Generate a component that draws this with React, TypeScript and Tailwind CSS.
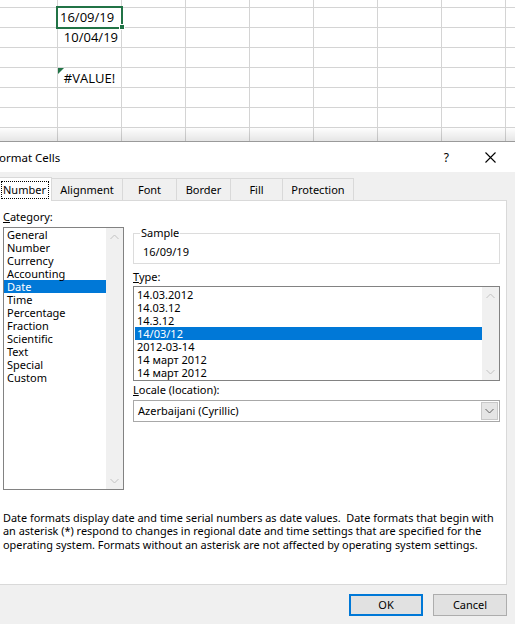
import React from "react";

function Chevron({ dir, color = "#c2c2c2" }: { dir: "up" | "down"; color?: string }) {
  return (
    <svg width="9" height="6" viewBox="0 0 9 6">
      <polyline
        points={dir === "up" ? "0.5,5 4.5,1 8.5,5" : "0.5,1 4.5,5 8.5,1"}
        fill="none"
        stroke={color}
        strokeWidth="1"
      />
    </svg>
  );
}

function Scrollbar() {
  return (
    <div className="w-[17px] shrink-0 bg-[#f0f0f0] flex flex-col justify-between">
      <div className="h-[17px] flex items-center justify-center">
        <Chevron dir="up" />
      </div>
      <div className="h-[17px] flex items-center justify-center">
        <Chevron dir="down" />
      </div>
    </div>
  );
}

function Sheet() {
  const cells: React.ReactNode[] = [];
  for (let r = 0; r < 8; r++) {
    for (let c = 0; c < 9; c++) {
      let content: React.ReactNode = null;
      if (r === 1 && c === 1)
        content = <div className="h-full flex items-center pl-[2px] pt-[1px]">16/09/19</div>;
      if (r === 2 && c === 1)
        content = <div className="h-full flex items-center justify-end pr-[3px] pt-[1px]">10/04/19</div>;
      if (r === 4 && c === 1)
        content = (
          <div className="h-full flex items-center justify-center pt-[2px]">
            <span>#VALUE!</span>
            <svg className="absolute left-0 top-0" width="6" height="6" viewBox="0 0 6 6">
              <polygon points="0,0 6,0 0,6" fill="#217346" />
            </svg>
          </div>
        );
      cells.push(
        <div key={`${r}-${c}`} className="relative border-r border-b border-[#d4d4d4]">
          {content}
        </div>
      );
    }
  }
  return (
    <div className="relative h-[141px] overflow-hidden font-['Open_Sans',sans-serif] text-[13px] text-black">
      <div className="grid grid-cols-[58px_repeat(8,64px)] grid-rows-[8px_repeat(7,20px)]">{cells}</div>
      <div className="absolute left-[56px] top-[6px] w-[67px] h-[23px] border-2 border-[#217346]" />
      <div className="absolute left-[119px] top-[24px] w-[6px] h-[6px] bg-[#217346] border border-white" />
      <div className="absolute left-0 right-0 bottom-0 h-[14px] bg-linear-to-b from-transparent to-black/10" />
    </div>
  );
}

const tabs = [
  { label: "Number", w: "w-[52px]", selected: true },
  { label: "Alignment", w: "w-[71px]" },
  { label: "Font", w: "w-[54px]" },
  { label: "Border", w: "w-[54px]" },
  { label: "Fill", w: "w-[52px]" },
  { label: "Protection", w: "w-[71px]" },
];

const categories = [
  "General",
  "Number",
  "Currency",
  "Accounting",
  "Date",
  "Time",
  "Percentage",
  "Fraction",
  "Scientific",
  "Text",
  "Special",
  "Custom",
];

const types = ["14.03.2012", "14.03.12", "14.3.12", "14/03/12", "2012-03-14", "14 март 2012", "14 март 2012"];

function Dialog() {
  return (
    <div className="h-[483px] border-t border-[#9a9a9a] bg-[#f0f0f0] font-['Noto_Sans',sans-serif] text-[11px] text-black">
      {/* title bar */}
      <div className="h-[30px] bg-white flex items-center pt-[1px]">
        <span className="ml-[-7px] text-[11.5px]">Format Cells</span>
        <span className="ml-auto text-[12px] mr-[36px]">?</span>
        <svg className="mr-[19px]" width="11" height="11" viewBox="0 0 11 11">
          <path d="M0.5 0.5 L10.5 10.5 M10.5 0.5 L0.5 10.5" stroke="#000" strokeWidth="1.1" />
        </svg>
      </div>

      {/* tabs */}
      <div className="pt-[6px]">
        <div className="relative z-10 flex items-end h-[23px]">
          {tabs.map((t) =>
            t.selected ? (
              <div
                key={t.label}
                className={`${t.w} h-[24px] bg-white border-t border-r border-[#d9d9d9] flex items-center pt-[1px]`}
              >
                <div className="ml-[1px] w-[48px] h-[18px] border border-dotted border-black flex items-center pl-[1px] leading-[14px]">
                  Number
                </div>
              </div>
            ) : (
              <div
                key={t.label}
                className={`${t.w} h-[22px] mb-[1px] bg-[#f0f0f0] border-t border-r border-[#d9d9d9] flex items-center justify-center pt-[2px]`}
              >
                {t.label}
              </div>
            )
          )}
        </div>

        {/* panel */}
        <div className="-mt-[1px] w-[507px] h-[385px] bg-white border-t border-r border-b border-[#d9d9d9] pl-[3px] pt-[9px]">
          <div className="flex gap-[9px]">
            {/* left column */}
            <div className="w-[121px] flex flex-col">
              <div className="leading-[14px] h-[14px]">
                <span className="underline">C</span>ategory:
              </div>
              <div className="mt-[3px] h-[263px] border border-[#828282] flex">
                <div className="flex-1">
                  {categories.map((c) => (
                    <div
                      key={c}
                      className={`h-[13px] leading-[13px] pl-[3px] ${c === "Date" ? "bg-[#0078d7] text-white" : ""}`}
                    >
                      {c}
                    </div>
                  ))}
                </div>
                <Scrollbar />
              </div>
            </div>

            {/* right column */}
            <div className="w-[367px] flex flex-col">
              <fieldset className="mt-[16px] border border-[#dcdcdc] h-[38px] pl-[6px]">
                <legend className="px-[1px] leading-[14px]">Sample</legend>
                <div className="leading-[14px] pt-[5px] pl-[3px]">16/09/19</div>
              </fieldset>
              <div className="mt-[6px] leading-[14px] h-[14px]">
                <span className="underline">T</span>ype:
              </div>
              <div className="mt-[2px] h-[95px] border border-[#828282] flex">
                <div className="flex-1 pt-[1px] pl-[1px]">
                  {types.map((t, i) => (
                    <div
                      key={i}
                      className={`h-[13px] leading-[13px] pl-[2px] ${i === 3 ? "bg-[#0078d7] text-white" : ""}`}
                    >
                      {t}
                    </div>
                  ))}
                </div>
                <Scrollbar />
              </div>
              <div className="mt-[2px] leading-[14px] h-[14px]">
                <span className="underline">L</span>ocale (location):
              </div>
              <div className="mt-[3px] h-[22px] border border-[#a8a8a8] flex items-stretch">
                <div className="flex-1 flex items-center pl-[4px]">Azerbaijani (Cyrillic)</div>
                <div className="w-[17px] m-[1px] ml-0 bg-[#e5e5e5] border border-[#c8c8c8] flex items-center justify-center">
                  <Chevron dir="down" color="#606060" />
                </div>
              </div>
            </div>
          </div>

          <div className="mt-[21px] leading-[13.3px] text-[10.9px] whitespace-nowrap">
            <div>Date formats display date and time serial numbers as date values.&nbsp; Date formats that begin with</div>
            <div>an asterisk (*) respond to changes in regional date and time settings that are specified for the</div>
            <div>operating system. Formats without an asterisk are not affected by operating system settings.</div>
          </div>
        </div>

        {/* buttons */}
        <div className="mt-[9px] w-[507px] flex justify-end gap-[10px]">
          <div className="w-[74px] h-[22px] bg-[#e1e1e1] border-2 border-[#0078d7] flex items-center justify-center">
            OK
          </div>
          <div className="w-[74px] h-[22px] bg-[#e1e1e1] border border-[#adadad] flex items-center justify-center">
            Cancel
          </div>
        </div>
      </div>
    </div>
  );
}

export default function App() {
  return (
    <div className="w-[515px] h-[624px] overflow-hidden bg-white">
      <Sheet />
      <Dialog />
    </div>
  );
}
